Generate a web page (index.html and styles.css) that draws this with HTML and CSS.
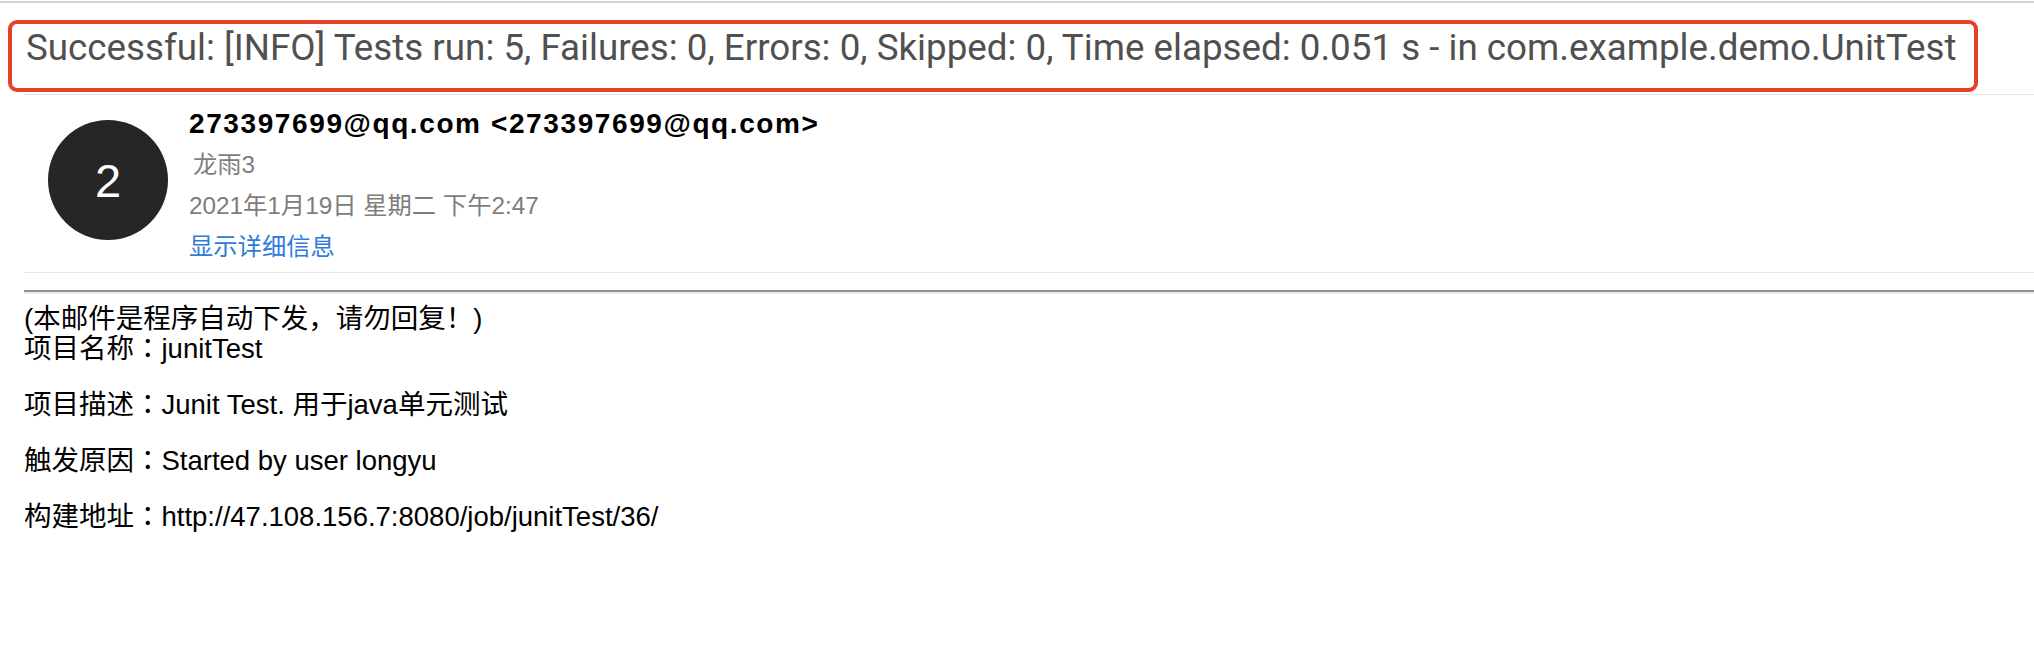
FILE: index.html
```html
<!DOCTYPE html>
<html lang="zh-CN">
<head>
<meta charset="utf-8">
<title>Build notification</title>
<link rel="stylesheet" href="styles.css">
</head>
<body>
<div class="topline"></div>
<div class="subject">Successful: [INFO] Tests run: 5, Failures: 0, Errors: 0, Skipped: 0, Time elapsed: 0.051 s - in com.example.demo.UnitTest</div>
<div class="subject-rule"></div>
<div class="sender">
  <div class="avatar">2</div>
  <div class="meta">
    <div class="from">273397699@qq.com &lt;273397699@qq.com&gt;</div>
    <div class="to">龙雨3</div>
    <div class="date">2021年1月19日 星期二 下午2:47</div>
    <div class="details">显示详细信息</div>
  </div>
</div>
<div class="sender-rule"></div>
<div class="hr"></div>
<div class="content">
  <p>(本邮件是程序自动下发，请勿回复！)<br>项目名称<span class="sep" lang="zh-TW">：</span>junitTest</p>
  <p>项目描述<span class="sep" lang="zh-TW">：</span>Junit Test. 用于java单元测试</p>
  <p>触发原因<span class="sep" lang="zh-TW">：</span>Started by user longyu</p>
  <p>构建地址<span class="sep" lang="zh-TW">：</span>http://47.108.156.7:8080/job/junitTest/36/</p>
</div>
</body>
</html>
```
FILE: styles.css
```css
html, body {
  margin: 0;
  padding: 0;
  background: #ffffff;
}
body {
  font-family: "Liberation Sans", "Noto Sans CJK SC", sans-serif;
  width: 2034px;
  height: 658px;
  overflow: hidden;
}
.topline {
  margin-top: 1px;
  height: 2px;
  background: #d3d3d3;
}
.subject {
  box-sizing: border-box;
  margin: 17px 0 0 8px;
  width: 1970px;
  height: 72px;
  border: 4px solid #e5402a;
  border-radius: 9px;
  padding: 3.5px 0 0 14px;
  font-family: Roboto, "Liberation Sans", sans-serif;
  font-size: 36.75px;
  line-height: 40px;
  color: #505050;
  white-space: nowrap;
}
.subject-rule {
  margin: 2px 0 0 24px;
  height: 1px;
  background: #e6e6e6;
}
.sender {
  display: flex;
  align-items: flex-start;
  gap: 21px;
  margin: 8px 0 0 48px;
}
.avatar {
  flex: none;
  width: 120px;
  height: 120px;
  margin-top: 17px;
  border-radius: 50%;
  background: #262626;
  color: #ffffff;
  font-size: 47px;
  line-height: 1;
  display: flex;
  align-items: center;
  justify-content: center;
}
.meta {
  display: flex;
  flex-direction: column;
  font-size: 24.3px;
  line-height: 41px;
}
.from {
  font-weight: bold;
  font-size: 28px;
  letter-spacing: 1.6px;
  color: #000000;
}
.to {
  color: #808080;
  padding-left: 4px;
}
.date {
  color: #7d7d7d;
}
.details {
  color: #2f7bd9;
}
.sender-rule {
  margin: 5px 0 0 24px;
  height: 1px;
  background: #e8e8e8;
}
.hr {
  margin: 17px 0 0 24px;
  border-top: 2px solid #939393;
  border-bottom: 2px solid #ececec;
}
.content {
  margin-top: 10px;
  padding-left: 24px;
  font-family: "Liberation Sans", "Noto Sans CJK SC", sans-serif;
  font-size: 27.5px;
  line-height: 30px;
  color: #000000;
}
.content p {
  margin: 0 0 26px;
}
.sep {
  font-family: "Noto Sans CJK TC", sans-serif;
  line-height: 0;
}
```
